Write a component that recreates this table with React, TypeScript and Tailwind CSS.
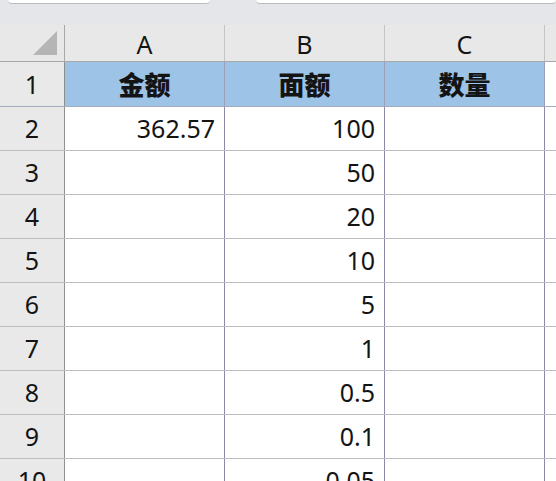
import React from "react";

const cols = ["A", "B", "C"];

const rows: { a?: string; b?: string; head?: boolean }[] = [
  { head: true },
  { a: "362.57", b: "100" },
  { b: "50" },
  { b: "20" },
  { b: "10" },
  { b: "5" },
  { b: "1" },
  { b: "0.5" },
  { b: "0.1" },
  { b: "0.05" },
];

const headers = ["金额", "面额", "数量"];

export default function App() {
  return (
    <div
      className="w-[556px] h-[481px] overflow-hidden bg-white text-[#141414]"
      style={{ fontFamily: '"Noto Sans", "Noto Sans CJK SC", sans-serif' }}
    >
      {/* formula bar remnant */}
      <div className="h-[25px] bg-[#e4e6e9] flex items-start">
        <div className="ml-[8px] w-[202px] h-[4px] bg-white border-b border-[#b9bcc1] rounded-b-sm" />
        <div className="ml-[46px] flex-1 h-[4px] bg-white border-b border-[#b9bcc1] rounded-b-sm" />
      </div>

      {/* column headers */}
      <div className="flex h-[37px] bg-[#e8e8e8] border-b border-[#a8a8a8]">
        <div className="w-[65px] shrink-0 border-r border-[#a8a8a8] flex items-end justify-end pr-[7px] pb-[6px]">
          <svg width="24" height="24" viewBox="0 0 24 24">
            <polygon points="24,0 24,24 0,24" fill="#b5b5b5" />
          </svg>
        </div>
        {cols.map((c) => (
          <div
            key={c}
            className="w-[160px] shrink-0 border-r border-[#c4c4c4] flex items-center justify-center text-[25px] leading-none pt-[3px]"
          >
            {c}
          </div>
        ))}
        <div className="flex-1" />
      </div>

      {rows.map((r, i) => (
        <div
          key={i}
          className={`flex ${i === 0 ? "h-[45px]" : "h-[44px]"} border-b ${i === 0 ? "border-[#a2acba]" : "border-[#bdbdbd]"}`}
        >
          <div className="w-[65px] shrink-0 bg-[#e9e9e9] border-r border-[#8f8f8f] flex items-center justify-center text-[25px] leading-none">
            {i + 1}
          </div>
          {r.head
            ? headers.map((h) => (
                <div
                  key={h}
                  className="w-[160px] shrink-0 bg-[#9dc3e6] border-r border-[#9b9fba] flex items-center justify-center text-[26px] font-black leading-none"
                  style={{ fontFamily: '"Noto Sans CJK SC", sans-serif' }}
                >
                  {h}
                </div>
              ))
            : [r.a, r.b, undefined].map((v, j) => (
                <div
                  key={j}
                  className="w-[160px] shrink-0 border-r border-[#8d88a6] flex items-center justify-end pr-[9px] text-[25px] leading-none"
                >
                  {v}
                </div>
              ))}
          <div className="flex-1" />
        </div>
      ))}
    </div>
  );
}
